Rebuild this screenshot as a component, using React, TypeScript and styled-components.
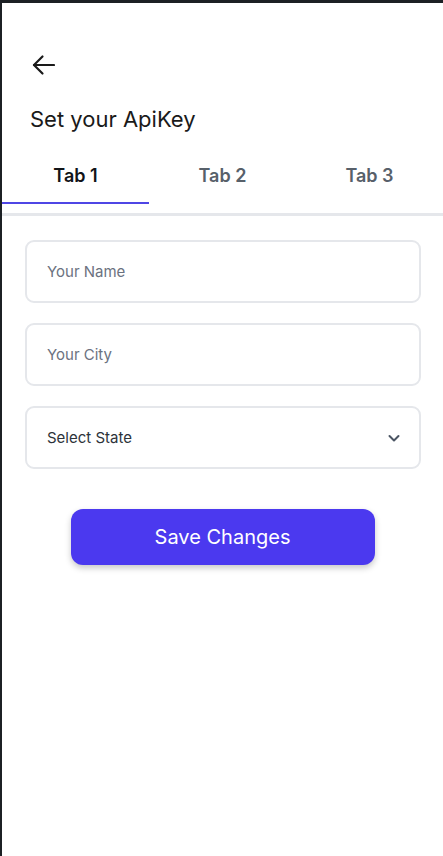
import { useState } from 'react';
import styled, { createGlobalStyle } from 'styled-components';

const GlobalStyle = createGlobalStyle`
  html, body {
    margin: 0;
    padding: 0;
    background: #ffffff;
  }
  body {
    font-family: Inter, "Noto Sans", sans-serif;
  }
  * {
    box-sizing: border-box;
  }
`;

const Frame = styled.div`
  min-height: 100vh;
  border-top: 3px solid #1c2024;
  border-left: 2px solid #1c2024;
  background: #ffffff;
  display: flex;
  flex-direction: column;
`;

const Header = styled.header`
  display: flex;
  flex-direction: column;
  align-items: flex-start;
  padding: 49px 0 0 28px;
`;

const BackButton = styled.button`
  display: flex;
  align-items: center;
  justify-content: center;
  width: 26px;
  height: 26px;
  padding: 0;
  border: none;
  background: none;
  color: #1a1a1a;
  cursor: pointer;
`;

const Title = styled.h1`
  margin: 27px 0 0;
  font-size: 22px;
  line-height: 28px;
  font-weight: 400;
  color: #1a1a1a;
  letter-spacing: 0;
`;

const TabList = styled.div`
  display: grid;
  grid-template-columns: repeat(3, 1fr);
  margin-top: 17px;
  padding-bottom: 9px;
  border-bottom: 3px solid #e5e7eb;
`;

const Tab = styled.button<{ $active: boolean }>`
  height: 54px;
  padding: 0 0 2px;
  border: none;
  border-bottom: 2px solid ${(p) => (p.$active ? '#4f46e5' : 'transparent')};
  background: none;
  font-family: inherit;
  font-size: 18px;
  font-weight: 600;
  color: ${(p) => (p.$active ? '#111418' : '#57606a')};
  cursor: pointer;
`;

const Form = styled.form`
  display: flex;
  flex-direction: column;
  gap: 20px;
  padding: 24px 22px 0 23px;
`;

const Field = styled.div`
  position: relative;
  display: flex;
  align-items: center;
  height: 63px;
  border: 2px solid #e5e7eb;
  border-radius: 9px;
  background: #fff;
`;

const Input = styled.input`
  flex: 1;
  height: 100%;
  padding: 0 20px;
  border: none;
  border-radius: 9px;
  background: transparent;
  font-family: inherit;
  font-size: 15px;
  color: #374151;
  outline: none;

  &::placeholder {
    color: #6b7280;
  }
`;

const SelectLabel = styled.span`
  flex: 1;
  padding: 0 20px;
  font-size: 15px;
  color: #2d333a;
`;

const Chevron = styled.span`
  display: flex;
  margin-right: 18px;
  color: #4b5563;
`;

const Actions = styled.div`
  display: flex;
  justify-content: center;
  padding-top: 40px;
`;

const SaveButton = styled.button`
  width: 304px;
  height: 56px;
  border: none;
  border-radius: 12px;
  background: #4b39ef;
  box-shadow: 0 3px 6px rgba(0, 0, 0, 0.22);
  font-family: inherit;
  font-size: 20px;
  font-weight: 400;
  color: #ffffff;
  cursor: pointer;
`;

const tabs = ['Tab 1', 'Tab 2', 'Tab 3'];

export default function App() {
  const [active, setActive] = useState(0);

  return (
    <>
      <GlobalStyle />
      <Frame>
        <Header>
          <BackButton aria-label="Back">
            <svg width="24" height="22" viewBox="0 0 24 22" fill="none" stroke="currentColor" strokeWidth="2.2" strokeLinecap="round" strokeLinejoin="round">
              <path d="M23 11H3" />
              <path d="M11.5 2.5L3 11l8.5 8.5" />
            </svg>
          </BackButton>
          <Title>Set your ApiKey</Title>
        </Header>

        <TabList>
          {tabs.map((t, i) => (
            <Tab key={t} $active={i === active} onClick={() => setActive(i)}>
              {t}
            </Tab>
          ))}
        </TabList>

        <Form onSubmit={(e) => e.preventDefault()}>
          <Field>
            <Input placeholder="Your Name" />
          </Field>
          <Field>
            <Input placeholder="Your City" />
          </Field>
          <Field>
            <SelectLabel>Select State</SelectLabel>
            <Chevron>
              <svg width="14" height="14" viewBox="0 0 14 14" fill="none" stroke="currentColor" strokeWidth="2" strokeLinecap="round" strokeLinejoin="round">
                <path d="M2.5 5l4.5 4.5L11.5 5" />
              </svg>
            </Chevron>
          </Field>
        </Form>

        <Actions>
          <SaveButton type="button">Save Changes</SaveButton>
        </Actions>
      </Frame>
    </>
  );
}
